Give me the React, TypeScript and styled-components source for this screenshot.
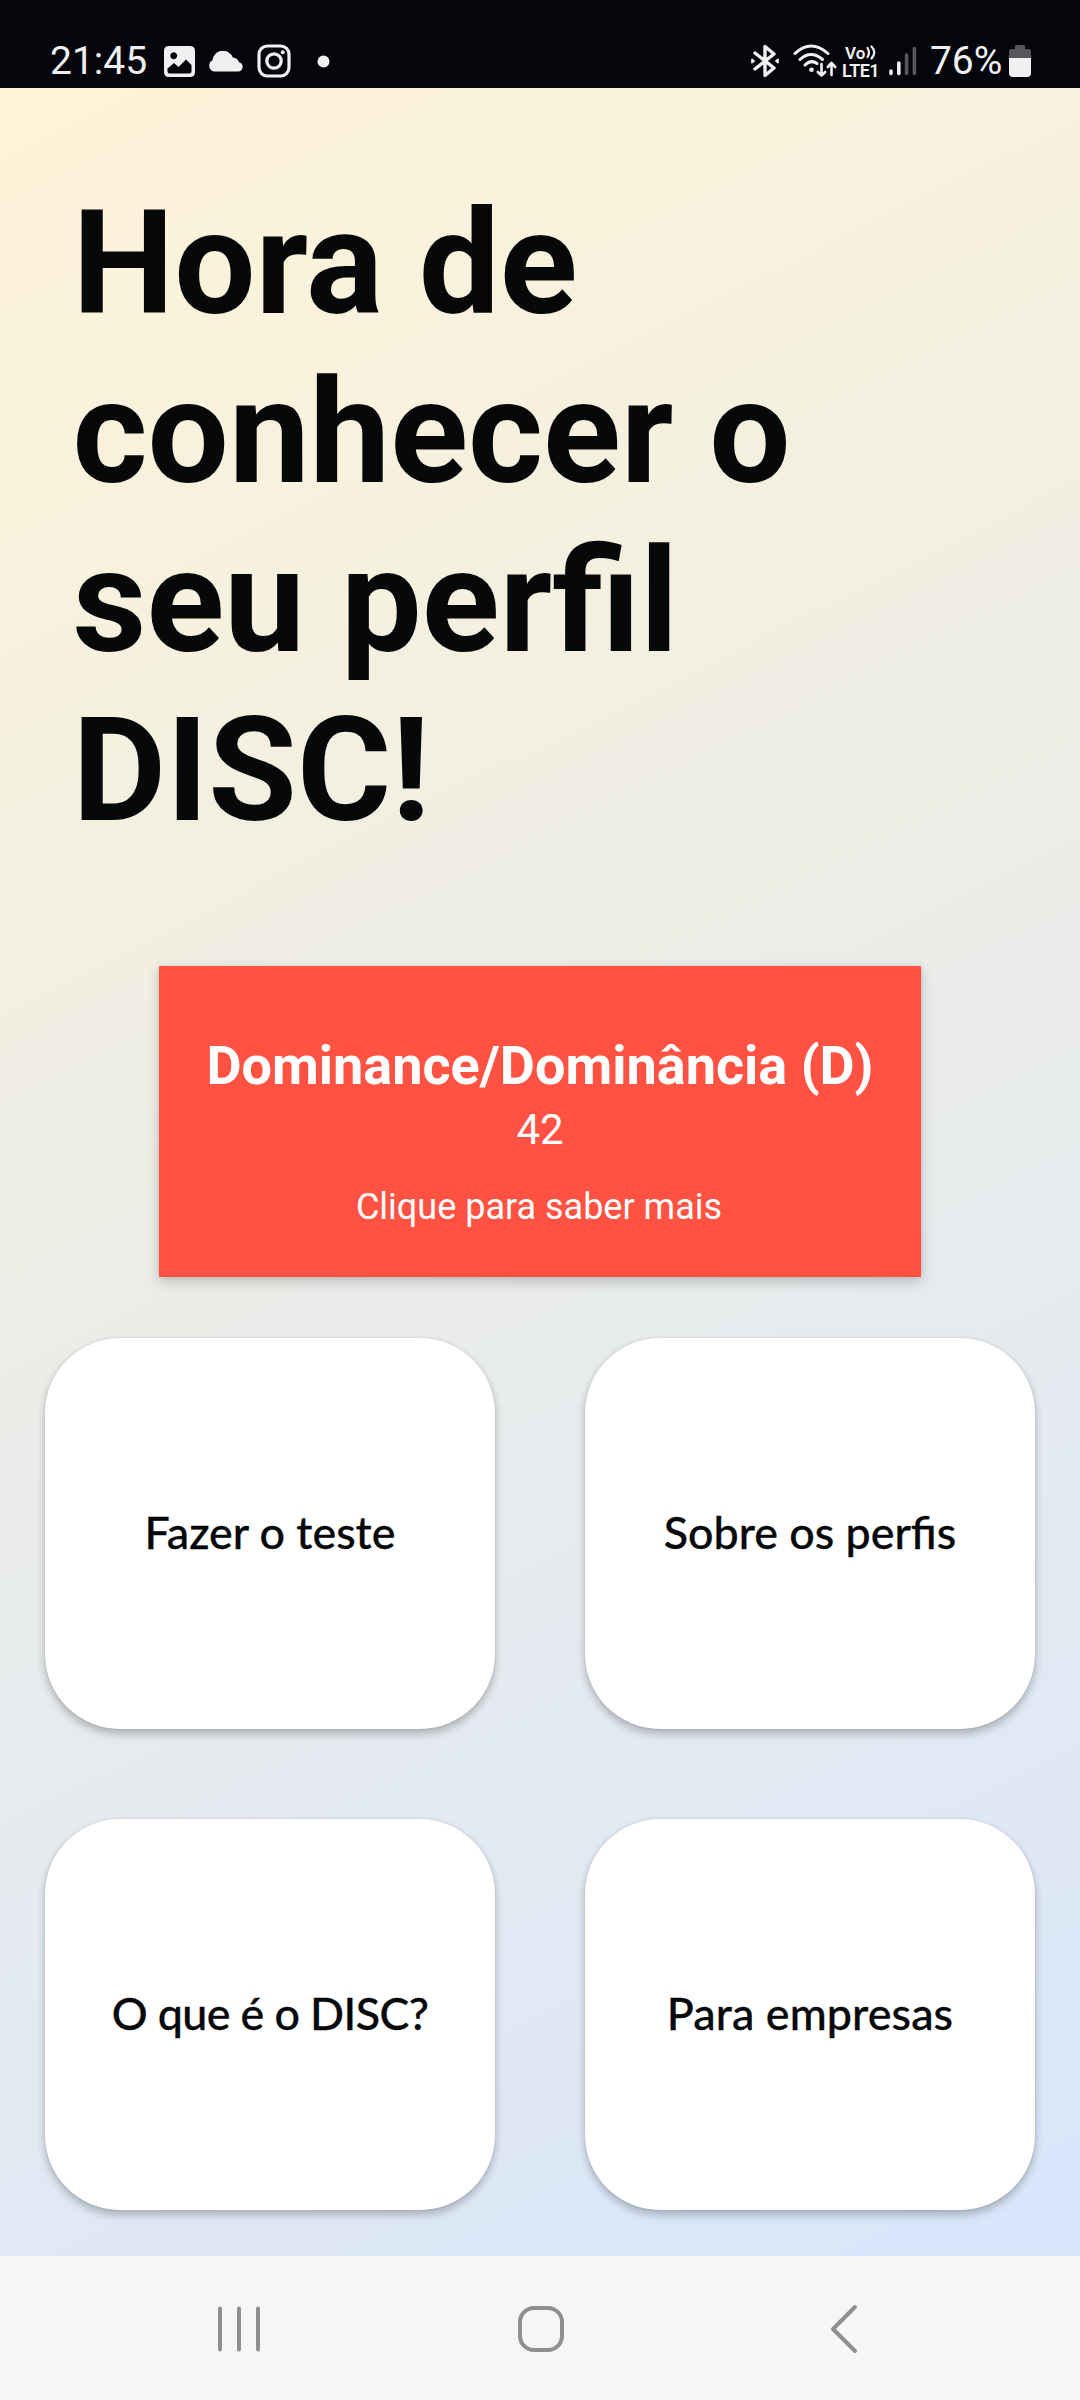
import React from "react";
import styled, { createGlobalStyle } from "styled-components";

const GlobalStyle = createGlobalStyle`
  * { box-sizing: border-box; }
  body { margin: 0; background: #f6f6f6; font-family: Roboto, sans-serif; }
`;

const Screen = styled.div`
  width: 1080px;
  height: 2400px;
  display: flex;
  flex-direction: column;
  overflow: hidden;
`;

const StatusBar = styled.header`
  height: 88px;
  flex: none;
  display: flex;
  justify-content: space-between;
  background: #05060b;
  color: #f0f0f2;
  padding: 37px 49px 0 50px;
`;

const StatusGroup = styled.div`
  display: flex;
  height: 48px;
  align-items: center;
`;

const StatusText = styled.span<{ $spacing: number; $width: number; $gap?: number }>`
  font-size: 39px;
  line-height: 48px;
  width: ${(p) => p.$width}px;
  margin-left: ${(p) => p.$gap ?? 0}px;
  white-space: nowrap;
  letter-spacing: ${(p) => p.$spacing}px;
`;

const StatusIcon = styled.svg<{ $gap: number }>`
  display: block;
  flex: none;
  margin-left: ${(p) => p.$gap}px;
`;

const VoLte = styled.div`
  display: flex;
  flex-direction: column;
  width: 38px;
  margin-left: 4px;
  padding-top: 1px;
  font-weight: 600;
  line-height: 18px;
  white-space: nowrap;
`;

const VoRow = styled.span`
  display: flex;
  align-items: center;
  gap: 1px;
  height: 18px;
  padding-left: 3px;
  font-size: 17px;
`;

const LteRow = styled.span`
  height: 18px;
  font-size: 18px;
  letter-spacing: -0.5px;
`;

const Content = styled.main`
  flex: 1;
  display: flex;
  flex-direction: column;
  background: linear-gradient(153.5deg, #fff3d8 0%, #f3f0e0 30%, #eaecea 52%, #d8e6fb 100%);
`;

const Title = styled.h1`
  margin: 91px 0 0 72.6px;
  width: 800px;
  font-size: 144px;
  line-height: 169px;
  font-weight: 700;
  color: #07080a;
`;

const ResultCard = styled.section`
  align-self: center;
  width: 762px;
  height: 311px;
  margin-top: 111px;
  display: flex;
  flex-direction: column;
  align-items: center;
  padding-top: 68px;
  background: #ff5242;
  color: #fff;
  box-shadow: 0 5px 12px rgba(0, 0, 0, 0.2), 0 0 4px rgba(0, 0, 0, 0.08);
`;

const ResultName = styled.h2`
  margin: 0;
  font-size: 54px;
  line-height: 63px;
  font-weight: 700;
  white-space: nowrap;
`;

const ResultScore = styled.span`
  font-size: 42px;
  line-height: 49px;
  margin-top: 8px;
`;

const ResultHint = styled.span`
  font-size: 36px;
  line-height: 42px;
  margin-top: 32px;
  padding-right: 2px;
`;

const TileGrid = styled.nav`
  display: grid;
  grid-template-columns: 450px 450px;
  grid-auto-rows: 391px;
  gap: 90px;
  margin: 61px 45px 0;
`;

const Tile = styled.button<{ $spacing: number }>`
  border: 0;
  border-radius: 75px;
  background: #fff;
  color: #08090b;
  font-family: Lato, sans-serif;
  font-weight: 500;
  font-size: 44.8px;
  line-height: 54px;
  letter-spacing: ${(p) => p.$spacing}px;
  -webkit-text-stroke: 0.3px #08090b;
  padding: 0 0 4px;
  box-shadow: 0 5px 9px rgba(0, 0, 0, 0.24), 0 0 3px rgba(0, 0, 0, 0.1);
`;

const NavBar = styled.footer`
  height: 144px;
  flex: none;
  display: flex;
  align-items: center;
  padding: 2px 0 0 216px;
  background: #f6f6f6;
`;

const NavIcon = styled.svg<{ $gap?: number }>`
  display: block;
  margin-left: ${(p) => p.$gap ?? 0}px;
  fill: none;
  stroke: #8f8f8f;
  stroke-width: 4;
  stroke-linecap: round;
  stroke-linejoin: round;
`;

const tiles = [
  { label: "Fazer o teste", spacing: 0 },
  { label: "Sobre os perfis", spacing: 0 },
  { label: "O que é o DISC?", spacing: -0.6 },
  { label: "Para empresas", spacing: 0.1 },
];

export default function App() {
  return (
    <Screen>
      <GlobalStyle />
      <StatusBar>
        <StatusGroup>
          <StatusText $width={98} $spacing={0}>21:45</StatusText>
          <StatusIcon $gap={16} width="31" height="31" viewBox="0 0 31 31">
            <path
              fill="#f0f0f2"
              fillRule="evenodd"
              d="M5 0H26Q31 0 31 5V26Q31 31 26 31H5Q0 31 0 26V5Q0 0 5 0ZM9.700 6.200a3.500 3.500 0 1 0 .01 0ZM3.500 22.500V25.500Q3.500 27.500 5.500 27.500H25.500Q27.500 27.500 27.500 25.500V19L22 13.500L14.500 21L10 17Z"
            />
          </StatusIcon>
          <StatusIcon $gap={13} width="37" height="21" viewBox="0 0 37 21">
            <path
              fill="#f0f0f2"
              d="M6 20.500A6 6 0 0 1 4.500 9.300A10.500 10.500 0 0 1 24.800 6.500A7 7 0 0 1 31 11.200A4.800 4.800 0 0 1 31 20.500Z"
            />
          </StatusIcon>
          <StatusIcon $gap={12} width="34" height="34" viewBox="0 0 34 34" fill="none" stroke="#f0f0f2">
            <rect x="2" y="2" width="30" height="30" rx="8.500" strokeWidth="3.200" />
            <circle cx="17" cy="17" r="7.200" strokeWidth="3.200" />
            <circle cx="25.700" cy="8.300" r="2" fill="#f0f0f2" stroke="none" />
          </StatusIcon>
          <StatusIcon $gap={26} width="13" height="13" viewBox="0 0 13 13">
            <circle cx="6.500" cy="6.500" r="6" fill="#f0f0f2" />
          </StatusIcon>
        </StatusGroup>
        <StatusGroup>
          <StatusIcon $gap={0} width="28" height="34" viewBox="0 0 28 34" fill="none" stroke="#f0f0f2" strokeWidth="3.400" strokeLinejoin="round" strokeLinecap="round">
            <path d="M4 9L23 24L14 31.500V2.500L23 10L4 25" />
            <path d="M1 15.500v3l2-1.500ZM27 15.500v3l-2-1.500Z" fill="#f0f0f2" strokeWidth="1.800" />
          </StatusIcon>
          <StatusIcon $gap={14} width="45" height="34" viewBox="0 0 45 34" fill="none" stroke="#f0f0f2" strokeWidth="3" strokeLinecap="round" strokeLinejoin="round">
            <path d="M2 9.500Q18 -5.500 35 9.500M7 15.500Q18 5.500 29.500 15.500M12 21Q18 15 24 19.500" />
            <circle cx="18.500" cy="25.700" r="2.300" fill="#f0f0f2" stroke="none" />
            <path d="M28.500 20V31M24.800 28L28.500 31.500L32.200 28M38.500 31V19.500M34.800 23L38.500 19L42.200 23" strokeWidth="2.600" />
          </StatusIcon>
          <VoLte>
            <VoRow>
              Vo
              <svg width="11" height="15" viewBox="0 0 11 15" fill="none" stroke="#f0f0f2" strokeWidth="2.200" strokeLinecap="round">
                <path d="M1.500 3Q4.500 7.500 1.500 12M5.500 1.500Q11 7.500 5.500 13.500" />
              </svg>
            </VoRow>
            <LteRow>LTE1</LteRow>
          </VoLte>
          <StatusIcon $gap={9} width="28" height="30" viewBox="0 0 28 30" strokeWidth="3.600" strokeLinecap="round">
            <path stroke="#f0f0f2" d="M2 25V27.500M9.800 17V27.500" />
            <path stroke="#56575b" d="M17.600 9V27.500M25.400 2.500V27.500" />
          </StatusIcon>
          <StatusText $width={77} $spacing={-0.1} $gap={13}>76%</StatusText>
          <StatusIcon $gap={2} width="22" height="32" viewBox="0 0 22 32">
            <path fill="#56575b" d="M7 0H15Q16 0 16 1V4H19Q22 4 22 7V13H0V7Q0 4 3 4H6V1Q6 0 7 0Z" />
            <path fill="#f0f0f2" d="M0 13H22V28Q22 32 18 32H4Q0 32 0 28Z" />
          </StatusIcon>
        </StatusGroup>
      </StatusBar>
      <Content>
        <Title>Hora de conhecer o seu perfil DISC!</Title>
        <ResultCard>
          <ResultName>Dominance/Dominância (D)</ResultName>
          <ResultScore>42</ResultScore>
          <ResultHint>Clique para saber mais</ResultHint>
        </ResultCard>
        <TileGrid>
          {tiles.map((t) => (
            <Tile key={t.label} $spacing={t.spacing}>
              {t.label}
            </Tile>
          ))}
        </TileGrid>
      </Content>
      <NavBar>
        <NavIcon width="46" height="50" viewBox="0 0 46 50">
          <path d="M4 4.500V45.500M23 4.500V45.500M42 4.500V45.500" />
        </NavIcon>
        <NavIcon $gap={254} width="50" height="50" viewBox="0 0 50 50">
          <rect x="4" y="4" width="42" height="42" rx="14" />
        </NavIcon>
        <NavIcon $gap={263} width="30" height="50" viewBox="0 0 30 50">
          <path d="M26 3L4 25L26 47" />
        </NavIcon>
      </NavBar>
    </Screen>
  );
}
